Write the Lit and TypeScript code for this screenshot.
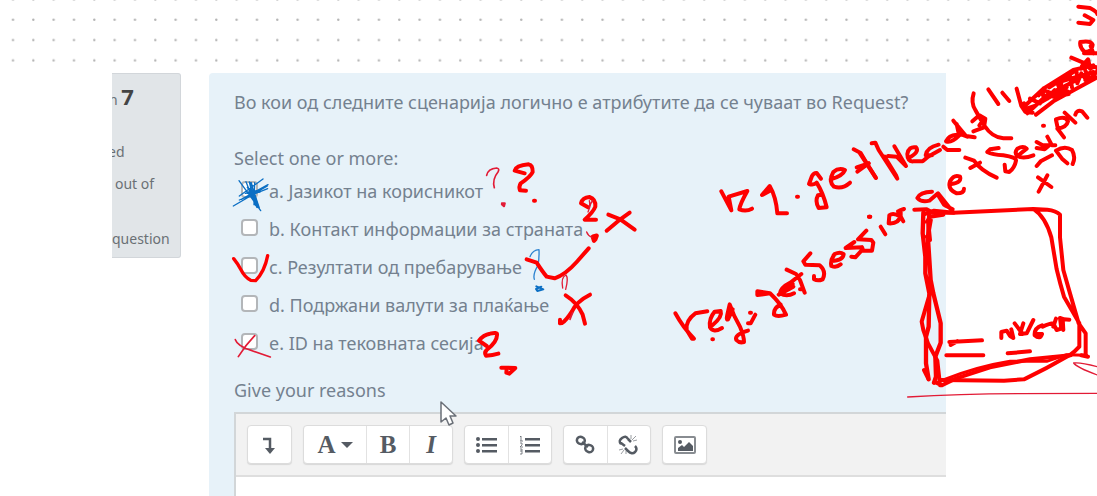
import { LitElement, html, svg, css } from "lit";
import { customElement } from "lit/decorators.js";

type Stroke = { d: string; w?: number; c?: string };
type Sheet = { x: number; y: number; strokes: Stroke[] };

const RED = "#fe0000";
const CRIMSON = "#e21b36";
const BLUE = "#0b6fc4";

// Pen strokes, kept per sheet at three units to the pixel.
const sheets: Sheet[] = [
  {
    x: 220,
    y: 150,
    strokes: [
      { c: BLUE, w: 4, d: "M40 168L142 108M58 150L143 116M57 92L122 182M58 138L129 87M78 95L106 166M94 98L112 164M92 98L118 174M104 98L102 164M64 148L144 104M76 130L112 124M82 112L110 150M88 96L104 160" },
      { c: BLUE, w: 9, d: "M84 128L118 124M92 118L106 156M98 122L112 170" },
      { w: 10, d: "M41 326Q54 342 62 358Q74 382 92 391L107 392Q134 364 143 317" },
      { c: CRIMSON, w: 5, d: "M46 569Q52 588 96 602L151 621M104 557Q76 586 55 620" },
    ],
  },
  {
    x: 460,
    y: 150,
    strokes: [
      { c: CRIMSON, w: 5, d: "M80 76Q84 56 110 54Q120 56 114 66Q96 88 103 113" },
      { c: CRIMSON, w: 7, d: "M126 160L134 160L132 168L126 163" },
      { d: "M194 70L164 62Q168 46 206 43Q219 46 218 66Q212 80 182 100Q176 110 180 121L198 122M222 152h3" },
      { d: "M384 172L363 160Q368 142 388 141Q408 148 406 170Q400 186 374 209L408 209M445 194L481 208L524 239M509 188L481 208L440 242" },
      { w: 13, d: "M399 260L410 257L406 268L402 272L399 262" },
      { c: CRIMSON, w: 4, d: "M384 186Q392 168 388 152M398 152Q390 160 388 176M380 246Q384 258 396 262" },
      { c: "#2d83d0", w: 4, d: "M210 320Q218 300 237 299Q238 324 234 346Q218 372 223 388" },
      { c: BLUE, w: 6, d: "M229 409L250 418L232 423L228 417L244 410" },
      { d: "M200 328L230 338Q248 366 260 380L284 385Q316 374 350 336L386 295" },
      { c: CRIMSON, w: 4, d: "M308 414Q302 382 318 375Q326 384 317 418" },
      { d: "M317 436Q352 458 368 494L375 521M390 434Q350 454 336 484Q318 512 306 519L300 520V509" },
      { c: CRIMSON, w: 5, d: "M330 508L338 488" },
      { d: "M80 588L57 572Q70 554 90 551Q112 546 111 554Q112 576 80 600Q72 608 78 617Q98 616 115 611M124 653L166 654L148 671L139 668L140 657" },
    ],
  },
  {
    x: 660,
    y: 80,
    strokes: [
      { d: "M184 334L214 391L206 350L262 333Q240 372 238 388Q258 396 276 386M306 345L329 318Q348 350 352 400L381 400M308 344L330 332M411 350h3" },
      { d: "M483 296L470 279Q462 278 456 288L447 312Q462 316 470 308Q490 340 500 382L476 384Q464 364 474 346L484 344M512 298Q548 288 555 270Q536 262 520 276Q504 304 522 320Q548 328 570 308M581 208L602 219L618 246L648 294M592 275L626 250" },
      { d: "M46 700Q70 744 102 776H96L80 750Q76 722 106 700L142 694M158 735Q188 710 182 693L164 695Q146 716 150 742Q160 760 186 744M218 688L204 718Q198 722 202 704L209 673Q220 706 240 740Q252 768 252 786Q238 790 229 780Q222 764 264 752M157 778h2M270 698h3M286 704L272 730L264 730" },
      { d: "M292 640H330L292 634V645L330 640Q364 672 378 704Q352 712 342 704Q340 684 362 674M356 644L400 620L390 608Q362 622 360 640Q380 652 402 640M364 630L398 612M380 569L408 582L420 600L434 638M384 614L424 582M420 628h4M451 520L430 544L436 554L479 556Q500 574 488 598Q474 604 462 598V588M514 543Q550 542 551 522Q540 514 524 522Q510 540 514 558Q530 564 542 553M583 486L557 504L606 502L608 508L586 532L574 530M619 452L594 478L634 480L640 488L636 512L610 512L606 502M627 410h4" },
    ],
  },
  {
    x: 860,
    y: 0,
    strokes: [
      { d: "M35 430L46 428L56 450L112 536L108 526L74 470M0 460L47 533M-10 502L26 490M103 439L138 498L110 470L84 468M145 474Q180 456 168 442Q146 438 142 462Q142 486 160 484H188L204 470L240 450M236 434Q200 442 197 466L216 466M250 440L262 450H298M290 404Q266 406 258 424Q274 430 298 406M280 362L318 408L344 412M290 372L296 400L322 410M341 280Q332 308 346 330Q358 352 374 378Q396 412 430 415L454 415M337 364L358 346L376 356L372 382L340 394M358 376L370 360M385 268L415 312M427 278L448 303" },
      { d: "M470 266L484 318L496 336L518 338M490 322L550 266L640 210L672 202M502 340L560 286L650 240M528 344L580 304L712 232M492 310L500 326L524 318M510 296L540 310M536 286L552 264M554 266Q540 290 562 296L584 270M568 262L640 216M580 290L626 282M594 254L606 288M604 248Q596 278 622 274M630 228L636 262M650 216L652 250L664 220L682 244M676 212L690 240M560 274L600 290M690 206Q716 194 712 212Q700 232 676 240M612 242L700 216M540 308L620 262" },
      { d: "M634 173L684 194M666 198L684 178L688 194M664 206L700 196M661 126Q692 120 698 134Q694 160 672 154Q658 140 661 126M672 160H710M692 138L700 160M655 20L690 24Q710 34 712 42M674 46L700 60L690 72L655 68" },
      { d: "M416 444L390 448L382 456Q396 464 430 466Q470 472 468 482Q464 504 448 516L436 514L434 494M480 462L500 446Q490 436 472 446Q462 458 472 468Q490 478 520 466M316 473L342 482Q362 512 410 533M331 504L360 488M530 426L548 436H568L554 448L530 444M562 410L576 436H586M549 377h3" },
      { d: "M588 358Q616 346 624 364Q620 382 592 386M588 360L594 388L612 412M614 338L646 368M646 344Q650 328 666 334L682 353M530 498L542 484L576 466M622 490L606 476L588 452Q614 436 636 450Q648 472 638 492M534 532L574 561M562 526L536 575M274 552Q306 548 300 530Q282 522 270 544Q262 568 290 580Q312 580 312 566" },
    ],
  },
  {
    x: 860,
    y: 180,
    strokes: [
      { d: "M216 35Q180 36 172 54Q184 68 208 62L234 40L276 92M232 42L252 74M254 76L278 88M62 140L76 163M27 110h3M88 106L86 130Q116 132 120 110Q100 96 88 106M114 94L130 124M118 92L132 87M122 90V116" },
      { d: "M163 89L200 88L218 98L280 98L520 87L562 89Q588 92 600 104V172L610 270L630 340L656 430L677 460V524M684 530L664 526M522 88Q556 110 574 172L590 268Q600 310 612 350L658 430V500Q644 516 628 526Q560 566 492 598L432 602L240 600" },
      { w: 13, d: "M190 98L188 160L196 230L196 280L208 340L206 440L198 470L198 550L206 598M208 100L204 176L212 300L220 340L242 430V488L226 530L228 590L222 608" },
      { w: 12, d: "M194 102L222 92L282 98M210 110L250 104M204 120L210 180L200 170M208 346L185 425L190 450L204 490L232 542L240 616M192 570L204 594M224 606L246 616L286 596L390 562L510 538L632 526" },
      { w: 9, d: "M250 600Q350 560 450 544L560 544L620 524L680 526M196 126L214 120L198 210" },
      { d: "M268 486L366 481M272 495L292 484M259 526H370M443 520L510 514M424 474V456L440 452L450 468L460 474L454 448M464 430L488 462M490 430L480 462L500 460L520 420M546 436Q522 444 524 466Q540 480 546 462L530 462M548 440Q570 430 580 430L590 450L604 446L600 414L612 418L628 419M580 440L588 416M608 416L610 450" },
      { c: CRIMSON, w: 4, d: "M143 651Q300 642 480 641L712 640M712 560Q660 546 641 549Q650 562 712 585" },
    ],
  },
];

const icons = {
  expand: svg`<path d="M4 4h7v12M11 12.500v4" fill="none" stroke="currentColor" stroke-width="2.500"/><path d="M6 13h10l-5 6z" fill="currentColor"/>`,
  bullets: svg`<g fill="currentColor"><circle cx="2" cy="4" r="2"/><circle cx="2" cy="10" r="2"/><circle cx="2" cy="16" r="2"/><path d="M6 3h15v2.500H6zM6 9h15v2.500H6zM6 15h15v2.500H6z"/></g>`,
  numbers: svg`<path d="M6 3h15v2.500H6zM6 9h15v2.500H6zM6 15h15v2.500H6z" fill="currentColor"/><path d="M1 2l1-1v5M1 6h3M1 8h2v2l-2 2h3M1 14h2v5H1M1 16h2" fill="none" stroke="currentColor" stroke-width="1" opacity=".75"/>`,
  link: svg`<g fill="none" stroke="currentColor" stroke-width="2.500"><rect x="2" y="2" width="8" height="7" rx="3.500" transform="rotate(20 6 5)"/><rect x="10" y="10" width="8" height="7" rx="3.500" transform="rotate(20 14 14)"/><path d="M7 7l6 5"/></g>`,
  unlink: svg`<g fill="none" stroke="currentColor" stroke-width="2.500"><path d="M3 9Q0 6 4 3T10 4M10 16Q14 20 17 17T17 11M3 8l4 3M10 16l-3-3M10 4l3 3"/><path d="M13 4V0M15 6l4-1M14 5l4-4M5 14l-4 1M6 15l-3 4M8 16v3" stroke-width="1" opacity=".6"/></g>`,
  image: svg`<rect x="1" y="2" width="20" height="16" rx="1" fill="none" stroke="currentColor" stroke-width="2" opacity=".7"/><circle cx="6" cy="7" r="2" fill="currentColor"/><path d="M4 16v-3l4-3 2 2 5-5 4 4v5z" fill="currentColor"/>`,
};

@customElement("app-root")
export class AppRoot extends LitElement {
  static styles = css`
    :host {
      display: flex;
      flex-direction: column;
      position: relative;
      box-sizing: border-box;
      height: 100vh;
      overflow: hidden;
      background: #fff;
      color: #74818f;
      font: 18px/24px "Noto Sans", "Open Sans", sans-serif;
    }
    .dots { display: block; width: 100%; height: 73px; flex: none; }
    .page {
      flex: 1;
      display: flex;
      align-items: flex-start;
      gap: 28px;
      padding: 0 151px 0 112px;
      min-height: 0;
    }
    .info {
      box-sizing: border-box;
      flex: none;
      width: 69px;
      height: 185px;
      overflow: hidden;
      border: 1px solid #d2d6da;
      border-left: 0;
      border-radius: 0 3px 3px 0;
      background: #e1e5e8;
      color: #6a7075;
      font-size: 14px;
      line-height: 20px;
      white-space: nowrap;
    }
    .info p, .info h2 { margin: 0; }
    .info h2 { font-size: 14px; font-weight: 400; line-height: 24px; margin: 10px 0 30px -3px; }
    .info b { font-size: 22px; color: #444; }
    .info .state { margin-left: -4px; }
    .info .mark { margin: 12px 0 35px 3px; }
    .question {
      flex: 1;
      min-width: 0;
      align-self: stretch;
      display: flex;
      flex-direction: column;
      padding: 17px 0 0 25px;
      border-radius: 4px 0 0 0;
      background: #e7f2f9;
      white-space: nowrap;
    }
    .text { margin: 0 0 32px; }
    fieldset { border: 0; margin: 0; padding: 0; min-width: 0; }
    legend { padding: 0 0 2px; }
    .option { display: flex; align-items: center; gap: 11px; padding-left: 7px; height: 38px; }
    .option input {
      appearance: none;
      box-sizing: border-box;
      width: 17px;
      height: 17px;
      margin: 0 0 3px;
      border: 2px solid #b3b6b9;
      border-radius: 4px;
      background: #fff;
    }
    .reasons { margin-top: 16px; }
    .editor {
      flex: 1;
      display: flex;
      flex-direction: column;
      min-height: 0;
      margin-top: 10px;
      border: 2px solid #d2d6d8;
      border-width: 2px 0 0 2px;
      background: #fff;
    }
    .bar { display: flex; gap: 11px; padding: 11px; background: #f2f2f2; border-bottom: 2px solid #dedede; }
    .group { display: flex; border: 1px solid #dcdcdc; border-radius: 4px; background: #fff; box-shadow: 0 1px 1px #d8d8d8; }
    .group button {
      box-sizing: border-box;
      display: flex;
      align-items: center;
      justify-content: center;
      width: 43px;
      height: 37px;
      padding: 0;
      border: 0;
      background: none;
      color: #555b63;
      font: bold 25px/36px "Liberation Serif", serif;
    }
    .group button + button { border-left: 1px solid #e2e2e2; }
    .group .style { width: 62px; gap: 5px; }
    .icon { width: 22px; height: 20px; }
    .caret { border: 6px solid transparent; border-top-color: currentColor; border-bottom: 0; }
    textarea { flex: 1; min-height: 0; border: 0; padding: 0; resize: none; outline: 0; background: #fff; }
    .ink { position: absolute; inset: 0; width: 100%; height: 100%; pointer-events: none; }
  `;

  private options = [
    "a. Јазикот на корисникот",
    "b. Контакт информации за страната",
    "c. Резултати од пребарување",
    "d. Подржани валути за плаќање",
    "e. ID на тековната сесија",
  ];

  private tool(name: string, icon: unknown) {
    return html`<button type="button" aria-label=${name}><svg class="icon" viewBox="0 0 22 20">${icon}</svg></button>`;
  }

  render() {
    return html`
      <svg class="dots" aria-hidden="true">
        <defs>
          <pattern id="grid" x="3" y="-11" width="20.330" height="20.330" patternUnits="userSpaceOnUse">
            <circle cx="10" cy="10.500" r="1.200" fill="#b4b4b4" />
          </pattern>
        </defs>
        <rect width="100%" height="66" fill="url(#grid)" />
      </svg>
      <main class="page">
        <aside class="info">
          <h2>n <b>7</b></h2>
          <p class="state">ed</p>
          <p class="mark">out of</p>
          <p>question</p>
        </aside>
        <form class="question">
          <p class="text">Во кои од следните сценарија логично е атрибутите да се чуваат во Request?</p>
          <fieldset>
            <legend>Select one or more:</legend>
            ${this.options.map(
              (o, i) => html`<div class="option"><input type="checkbox" id="o${i}" /><label for="o${i}">${o}</label></div>`
            )}
          </fieldset>
          <label class="reasons" for="reasons">Give your reasons</label>
          <div class="editor">
            <div class="bar">
              <div class="group">${this.tool("Expand", icons.expand)}</div>
              <div class="group">
                <button type="button" class="style" aria-label="Paragraph styles">A<span class="caret"></span></button>
                <button type="button">B</button>
                <button type="button"><i>I</i></button>
              </div>
              <div class="group">${this.tool("Bulleted list", icons.bullets)}${this.tool("Numbered list", icons.numbers)}</div>
              <div class="group">${this.tool("Link", icons.link)}${this.tool("Unlink", icons.unlink)}</div>
              <div class="group">${this.tool("Image", icons.image)}</div>
            </div>
            <textarea id="reasons"></textarea>
          </div>
        </form>
      </main>
      <svg class="ink" aria-hidden="true">
        <path d="M441 402v20l5-4 3 7 4-2-3-7h6z" fill="#fff" stroke="#6b7078" stroke-width="1.500" stroke-linejoin="round" />
        ${sheets.map(
          (s) => svg`<g transform="translate(${s.x} ${s.y}) scale(.33333)" fill="none" stroke-linecap="round" stroke-linejoin="round">
            ${s.strokes.map((k) => svg`<path d=${k.d} stroke=${k.c ?? RED} stroke-width=${k.w ?? 12} />`)}
          </g>`
        )}
      </svg>
    `;
  }
}
